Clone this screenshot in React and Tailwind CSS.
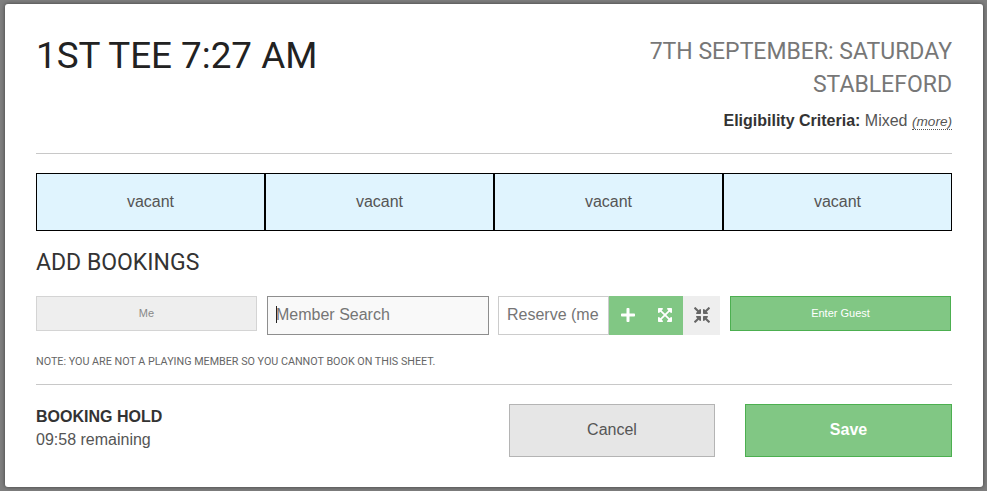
import { FaPlus, FaExpandArrowsAlt, FaCompressArrowsAlt } from 'react-icons/fa';

const slots = ['vacant', 'vacant', 'vacant', 'vacant'];

export default function App() {
  return (
    <div className="h-[491px] w-[987px] overflow-hidden bg-[#7f7f7f] pt-[4px] pl-[5px] font-['Liberation_Sans',sans-serif]">
      {/* Modal */}
      <div className="h-[483px] w-[978px] rounded-[3px] bg-white px-[31px] pt-[30px] shadow-[0_0_4px_rgba(0,0,0,0.5)]">
        {/* Header */}
        <div className="flex h-[120px] justify-between border-b border-[#c8c8c8]">
          <h1 className="pt-[1px] font-['Roboto',sans-serif] text-[36.8px] leading-[42px] text-[#222222]">1ST TEE 7:27 AM</h1>
          <div className="text-right">
            <div className="pt-[1px] font-['Roboto',sans-serif] text-[23px] leading-[33px] text-[#777777]">
              7TH SEPTEMBER: SATURDAY
              <br />
              STABLEFORD
            </div>
            <div className="mt-[10px] text-[16px] leading-[20px] text-[#555555]">
              <b className="text-[#333333]">Eligibility Criteria:</b> Mixed{' '}
              <span className="border-b border-dotted border-[#555555] text-[13.6px] italic">(more)</span>
            </div>
          </div>
        </div>

        {/* Tee slots */}
        <div className="mt-[19px] grid h-[58px] grid-cols-4">
          {slots.map((slot, i) => (
            <div key={i} className="flex items-center justify-center border border-black bg-[#e0f4fe] text-[16px] text-[#555555]">
              {slot}
            </div>
          ))}
        </div>

        <h2 className="mt-[19px] font-['Roboto',sans-serif] text-[23px] leading-[26px] text-[#333333]">ADD BOOKINGS</h2>

        {/* Booking inputs */}
        <div className="mt-[20px] flex items-start">
          <button className="h-[35px] w-[221px] border border-[#d4d4d4] bg-[#eeeeee] text-[11px] text-[#888888]">Me</button>
          <div className="relative ml-[10px]">
            <input
              readOnly
              placeholder="Member Search"
              className="h-[39px] w-[222px] border border-[#8e8e8e] bg-[#f9f9f9] px-[8px] pb-[2px] text-[16px] outline-none placeholder:text-[#757575]"
            />
            {/* text caret of the focused field */}
            <span className="absolute top-[10px] left-[9px] h-[17px] w-px bg-[#222222]" />
          </div>
          <input
            readOnly
            placeholder="Reserve (member)"
            className="ml-[9px] h-[39px] w-[111px] border border-[#cccccc] bg-white pr-[9px] pb-[2px] pl-[8px] text-[16px] outline-none placeholder:text-[#757575]"
          />
          <div className="flex h-[39px] w-[74px] items-center bg-[#81c784] pb-[2px] text-white">
            <div className="flex w-[37px] justify-center"><FaPlus size={16} /></div>
            <div className="flex w-[37px] justify-center"><FaExpandArrowsAlt size={16} /></div>
          </div>
          <div className="flex h-[39px] w-[37px] items-center justify-center bg-[#eeeeee] pb-[2px] text-[#666666]"><FaCompressArrowsAlt size={16} /></div>
          <button className="ml-[10px] h-[35px] w-[221px] border border-[#4caf50] bg-[#81c784] text-[11px] text-white">Enter Guest</button>
        </div>

        <p className="mt-[21px] font-['Roboto',sans-serif] text-[10.75px] leading-[12px] text-[#666666]">NOTE: YOU ARE NOT A PLAYING MEMBER SO YOU CANNOT BOOK ON THIS SHEET.</p>

        {/* Footer */}
        <div className="mt-[16px] flex border-t border-[#c8c8c8] pt-[19px]">
          <div className="flex-1 pt-[3px]">
            <div className="text-[16px] leading-[20px] font-bold text-[#333333]">BOOKING HOLD</div>
            <div className="mt-[1px] text-[16px] leading-[24px] text-[#555555]">09:58 remaining</div>
          </div>
          <button className="h-[53px] w-[206px] border border-[#b4b4b4] bg-[#e6e6e6] pb-[2px] text-[16px] text-[#555555]">Cancel</button>
          <button className="ml-[30px] h-[53px] w-[207px] border border-[#4caf50] bg-[#81c784] pb-[2px] text-[16px] font-bold text-white">Save</button>
        </div>
      </div>
    </div>
  );
}
